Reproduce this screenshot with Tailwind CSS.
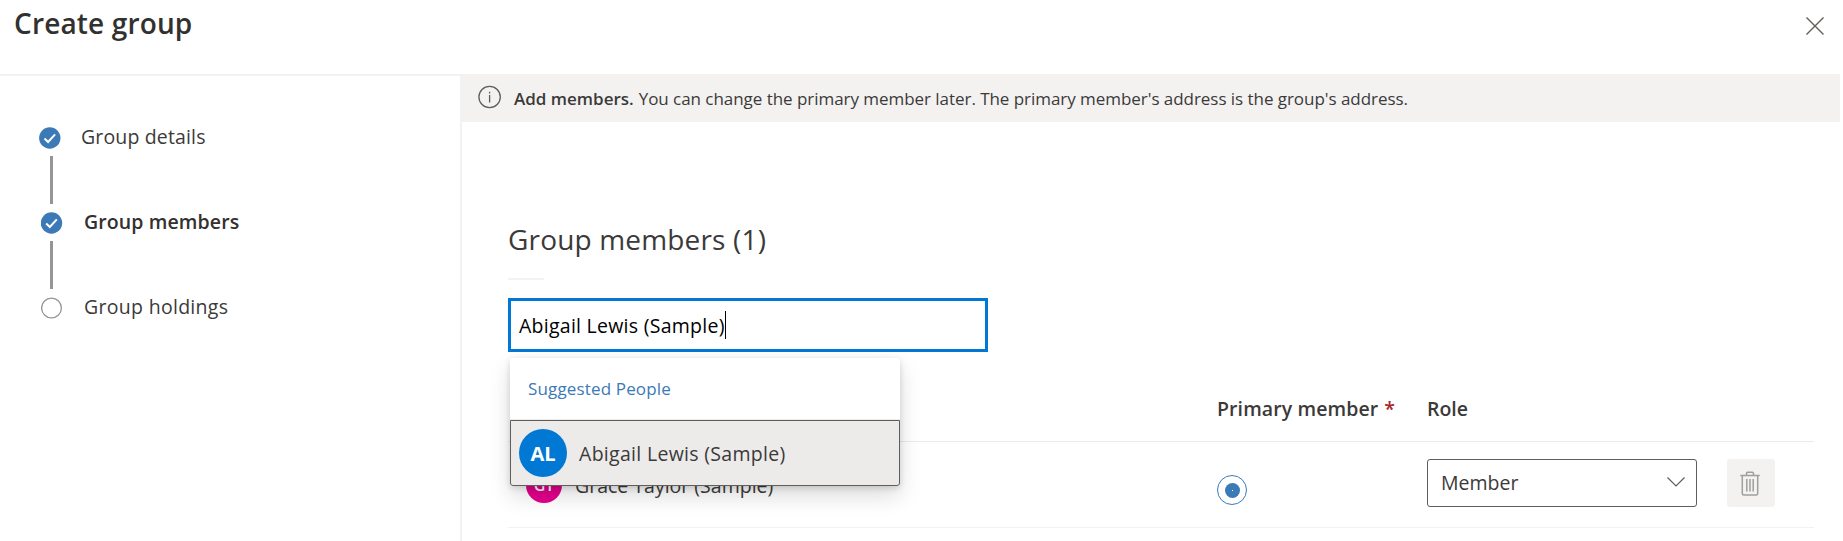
<!DOCTYPE html>
<html lang="en"><head><meta charset="utf-8"><title>Create group</title>
<script src="https://cdn.jsdelivr.net/npm/@tailwindcss/browser@4"></script></head>
<body class="h-[541px] overflow-hidden bg-white font-['Open_Sans',sans-serif] text-[19.5px] text-[#3b3a39]">
<header class="flex h-[74px] items-start justify-between pl-[14px] pr-[19px]">
<h1 class="mt-[3px] text-[28px] font-semibold leading-[40px] tracking-[0.15px] text-[#323130]">Create group</h1>
<svg class="mt-[17px] size-[18px]" viewBox="0 0 18 18" fill="none" stroke="#605e5c" stroke-width="1.4"><path d="M.5.5l17 17M17.5.5l-17 17"/></svg>
</header>
<div class="flex h-[467px]">
<nav class="flex w-[460px] flex-col border-t-2 border-[#f3f2f1] pt-[43px] leading-[26px]">
<div class="flex h-[37px] items-center pl-[39px]"><svg class="size-[22px]" viewBox="0 0 22 22"><circle cx="10.8" cy="11" r="10.7" fill="#3b79b7"/><path d="M5.500 11.500l3.600 3.500 7-7.600" fill="none" stroke="#fff" stroke-width="2"/></svg><span class="ml-[20px] pb-[2px] tracking-[0.15px]">Group details</span></div>
<div class="ml-[50px] h-[48px] w-[3px] bg-[#979593]"></div>
<div class="flex h-[37px] items-center pl-[41px]"><svg class="size-[22px]" viewBox="0 0 22 22"><circle cx="10.5" cy="11" r="10.7" fill="#3b79b7"/><path d="M5.200 11.500l3.600 3.500 7-7.600" fill="none" stroke="#fff" stroke-width="2"/></svg><span class="ml-[21px] pb-[2px] font-semibold tracking-[0.12px] text-[#323130]">Group members</span></div>
<div class="ml-[50px] h-[48px] w-[3px] bg-[#979593]"></div>
<div class="flex h-[37px] items-center pl-[41px]"><svg class="size-[22px]" viewBox="0 0 22 22"><circle cx="10.5" cy="11" r="9.900" fill="none" stroke="#979593" stroke-width="1.3"/></svg><span class="ml-[21px] pb-[2px] tracking-[0.3px]">Group holdings</span></div>
</nav>
<main class="flex flex-1 flex-col">
<div class="mr-[3px] flex h-[48px] items-center bg-[#f3f2f1] pl-[18px] text-[17px]">
<svg class="mb-[2px] size-[24px]" viewBox="0 0 24 24" fill="none" stroke="#605e5c" stroke-width="1.3"><circle cx="11.6" cy="12" r="10.7"/><path d="M11.600 10v7.500M11.600 6.800v1.800"/></svg>
<span class="ml-[12px] pt-px font-semibold">Add members.</span><span class="ml-[5px] pt-px tracking-[-0.045px]">You can change the primary member later. The primary member's address is the group's address.</span>
</div>
<div class="flex-1 border-l-2 border-[#f3f2f1] pl-[46px] pr-[29px] pt-[97px]">
<h2 class="text-[28px] leading-[40px] tracking-[0.17px]">Group members (1)</h2>
<div class="mt-[19px] h-[2px] w-[36px] bg-[#f3f2f1]"></div>
<div class="relative mt-[18px] flex h-[54px] w-[480px] items-center border-[3px] border-[#0078d4] pl-[8px] text-black">
<span class="pt-[2px] tracking-[0.26px]">Abigail Lewis (Sample)</span><i class="h-[28px] w-px bg-black"></i>
<div class="absolute left-[-1px] top-[57px] z-10 flex h-[128px] w-[390px] flex-col rounded-[3px] bg-white text-[#3b3a39] shadow-[0_10px_22px_rgba(0,0,0,0.14),0_2px_6px_rgba(0,0,0,0.14)]">
<div class="flex h-[62px] items-center border-b border-[#edebe9] pl-[18px] text-[17px] tracking-[0.15px] text-[#3b79b7]">Suggested People</div>
<div class="flex h-[66px] items-center rounded-b-[3px] border border-[#605e5c] bg-[#edebe9] pl-[8px]"><div class="flex size-[48px] items-center justify-center rounded-full bg-[#0078d4] pt-[2px] text-[20px] font-bold text-white">AL</div><span class="ml-[12px] pt-[2px] tracking-[0.3px]">Abigail Lewis (Sample)</span></div>
</div></div>
<div class="mt-[24px] grid h-[66px] grid-cols-[709px_210px_1fr] items-center border-b border-[#edebe9] font-semibold"><div></div><div class="flex"><span class="tracking-[0.1px]">Primary member</span><span class="ml-[6px] text-[#a4262c]">*</span></div><span>Role</span></div>
<div class="grid h-[86px] grid-cols-[709px_210px_270px_48px] items-center border-b border-[#f3f2f1]">
<div class="flex items-center pl-[18px]"><div class="flex size-[36px] items-center justify-center rounded-full bg-[#e3008c] text-[16px] font-semibold text-white">GT</div><span class="ml-[13px] pt-[2px]">Grace Taylor (Sample)</span></div>
<svg class="mt-[11px] size-[30px]" viewBox="0 0 30 30"><circle cx="15" cy="15" r="14.5" fill="none" stroke="#3b79b7"/><circle cx="15.5" cy="15.5" r="7.5" fill="#3b79b7"/><path d="M15 15h1v1h-1z" fill="#fff"/></svg>
<div class="mb-[3px] flex h-[48px] items-center justify-between rounded-[3px] border border-[#605e5c] pl-[13px] pr-[11px]"><span>Member</span><svg class="mb-[2px] h-[10px] w-[18px]" viewBox="0 0 18 10" fill="none" stroke="#605e5c" stroke-width="1.2"><path d="M.5.5L9 9 17.500.5"/></svg></div>
<div class="mb-[3px] ml-[30px] flex size-[48px] items-center justify-center rounded-[3px] bg-[#f3f2f1] pr-[2px]"><svg class="h-[25px] w-[20px]" viewBox="0 0 20 25" fill="none" stroke="#a19f9d" stroke-width="1.5"><path d="M.3 4.500h19.400M6.500 4V2.500q0-1.200 1.200-1.200h4.600q1.200 0 1.200 1.200V4M2.300 4.500v18q0 1.500 1.500 1.500h12.400q1.500 0 1.500-1.500v-18M6.800 8v12.500M10 8v12.500M13.200 8v12.500"/></svg></div>
</div></div></main></div>
</body></html>
